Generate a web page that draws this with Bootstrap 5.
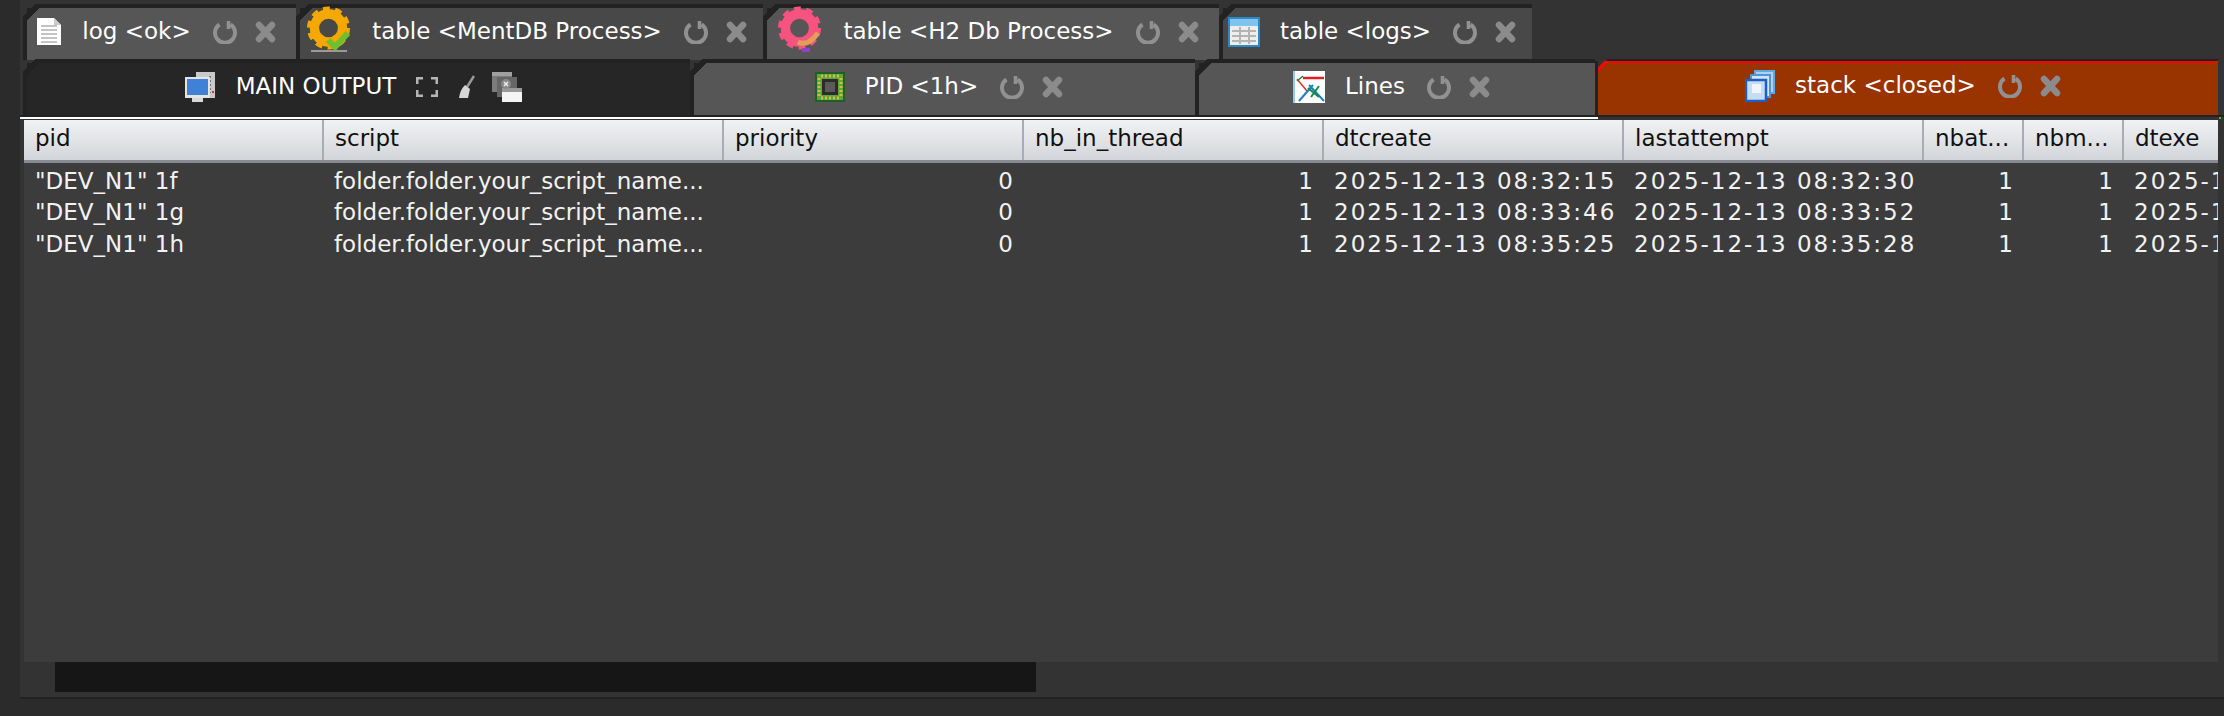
<!DOCTYPE html>
<html lang="en">
<head>
    <meta charset="UTF-8">
    <meta name="viewport" content="width=device-width, initial-scale=1.0">
    <title>MentDB Editor</title>
    <link rel="stylesheet" href="https://cdn.jsdelivr.net/npm/bootstrap@5.3.0/dist/css/bootstrap.min.css">
    <style>
        body {
            margin: 0;
            height: 716px;
            overflow: hidden;
            background: #2b2b2b;
            font-family: "DejaVu Sans", "Open Sans", sans-serif;
            font-size: 23px;
        }
        .app-shell {
            margin-left: 20px;
            height: 699px;
            padding-top: 4px;
            background: #333;
            border-bottom: 2px solid #222;
            overflow: hidden;
        }
        .tab-row { height: 55px; padding-left: 3px; }
        .tab-cell {
            flex: none;
            height: 56px;
            padding: 4px 0 0 4px;
            color: #fff;
            background: linear-gradient(135deg, transparent 9px, #222 9px);
        }
        .tab-fill {
            height: 100%;
            padding: 0 10px 5px 0;
            white-space: nowrap;
            background: linear-gradient(135deg, #222 9px, var(--tab-color) 9px);
        }
        .tab-light { --tab-color: #565656; }
        .tab-dim { --tab-color: #484848; }
        .tab-black { --tab-color: #262626; }
        .tab-w1 { width: 273px; }
        .tab-w2 { width: 467px; }
        .tab-w3 { width: 456px; }
        .tab-w4 { width: 313px; }
        .tab-w5 { width: 667px; }
        .tab-w6 { width: 505px; }
        .tab-w7 { width: 400px; }
        .tab-red {
            width: 623px;
            padding: 2px 0 0 0;
        }
        .tab-red .tab-fill {
            padding-right: 6px;
            box-shadow: inset 3px 0 0 #222;
            background:
                linear-gradient(135deg, #333 7px, #ff0000 7px, #ff0000 10px, transparent 10px),
                linear-gradient(#ff0000 2px, #993300 2px);
        }
        .tab-title { margin: 0 22px 0 20px; }
        .tab-icon { flex: none; display: block; }
        .gear-icon { margin: -10px 0 -5px; }
        .tool-gap { margin-left: 20px; }
        .action-reload { width: 24px; height: 24px; flex: none; margin-right: 17px; }
        .action-close { width: 23px; height: 22px; flex: none; }
        .tab-line { height: 4px; margin-top: 1px; border-top: 2px solid #222; }
        .tab-line-white { width: 1578px; height: 2px; background: #fff; }
        .tab-line-dot { width: 2px; height: 2px; margin-right: 3px; background: #1fd21f; }
        .table-wrap {
            margin: 1px 0 0 4px;
            width: 2194px;
            height: 542px;
            background: #3c3c3c;
            overflow: hidden;
        }
        .proc-table {
            width: 2399px;
            table-layout: fixed;
            margin: 0;
            --bs-table-bg: transparent;
            --bs-table-color: #f2f2f2;
            font-size: 23px;
            line-height: 1.2;
        }
        .proc-table th {
            height: 41px;
            padding: 0 0 2px 11px;
            font-weight: 400;
            color: #111;
            white-space: nowrap;
            overflow: hidden;
            vertical-align: middle;
            background: linear-gradient(#f1f2f4, #d2d5d9);
            border-right: 2px solid #a9adb3;
            border-bottom: 3px solid #868b94;
        }
        .proc-table td {
            height: 31.5px;
            padding: 0 10px 0 11px;
            white-space: nowrap;
            overflow: hidden;
            vertical-align: middle;
        }
        .proc-table td.date-cell { letter-spacing: 2px; }
        .proc-table tbody::before { content: ""; display: table-row; height: 5px; }
        .scroll-track { height: 30px; margin-left: 35px; }
        .scroll-thumb { width: 981px; height: 30px; background: #161616; }
    </style>
</head>
<body>

<svg width="0" height="0" class="position-absolute">
    <symbol id="ico-reload" viewBox="0 0 24 24">
        <path d="M6.5 4.5 A10 10 0 1 0 17.5 4.5" fill="none" stroke="#919191" stroke-width="4"/>
        <path d="M15.5 1 V9" fill="none" stroke="#919191" stroke-width="3.6"/>
    </symbol>
    <symbol id="ico-close" viewBox="0 0 23 22">
        <path d="M5 4 L18 18 M18 4 L5 18" fill="none" stroke="#8b8b8b" stroke-width="6.5" stroke-linecap="round"/>
    </symbol>
    <symbol id="ico-gear" viewBox="0 0 47 47">
        <circle cx="23.5" cy="23.5" r="15" fill="none" stroke="currentColor" stroke-width="10"/>
        <circle cx="23.5" cy="23.5" r="20" fill="none" stroke="currentColor" stroke-width="6" stroke-dasharray="7 5.57"/>
    </symbol>
</svg>

<div class="app-shell">

    <!-- first tab row -->
    <div class="d-flex tab-row">
        <div class="tab-cell tab-w1 tab-light">
            <div class="tab-fill d-flex align-items-center justify-content-center">
                <svg class="tab-icon" width="26" height="29" viewBox="0 0 26 29"><path d="M1 1 H18 L25 8 V28 H1 Z" fill="#fff"/><path d="M18 1 V8 H25" fill="#ccc"/><path d="M5 9 H21 M5 13 H21 M5 17 H21 M5 21 H21 M5 25 H21" stroke="#c4c4c4" stroke-width="2"/></svg>
                <span class="tab-title">log &lt;ok&gt;</span>
                <svg class="action-reload"><use href="#ico-reload"/></svg>
                <svg class="action-close"><use href="#ico-close"/></svg>
            </div>
        </div>
        <div class="tab-cell tab-w2 tab-dim">
            <div class="tab-fill d-flex align-items-center justify-content-center">
                <svg class="tab-icon gear-icon" width="47" height="47" viewBox="0 0 47 47" style="color:#f5a800"><use href="#ico-gear" width="47" height="44"/><path d="M6 45 H42" stroke="#9a9a9a" stroke-width="2"/><path d="M23 34 L30 41 L43 27" fill="none" stroke="#6fbf2e" stroke-width="6"/></svg>
                <span class="tab-title">table &lt;MentDB Process&gt;</span>
                <svg class="action-reload"><use href="#ico-reload"/></svg>
                <svg class="action-close"><use href="#ico-close"/></svg>
            </div>
        </div>
        <div class="tab-cell tab-w3 tab-light">
            <div class="tab-fill d-flex align-items-center justify-content-center">
                <svg class="tab-icon gear-icon" width="47" height="47" viewBox="0 0 47 47" style="color:#f8527f"><use href="#ico-gear" width="47" height="44"/><path d="M22 36 Q32 41 42 27" fill="none" stroke="#e0a05a" stroke-width="5"/><path d="M26 44 H34" stroke="#8a44c4" stroke-width="4"/></svg>
                <span class="tab-title">table &lt;H2 Db Process&gt;</span>
                <svg class="action-reload"><use href="#ico-reload"/></svg>
                <svg class="action-close"><use href="#ico-close"/></svg>
            </div>
        </div>
        <div class="tab-cell tab-w4 tab-dim">
            <div class="tab-fill d-flex align-items-center justify-content-center">
                <svg class="tab-icon" width="32" height="30" viewBox="0 0 32 30"><rect x="1" y="1" width="30" height="28" fill="#eee" stroke="#2d88c8" stroke-width="2"/><rect x="2" y="2" width="28" height="7" fill="#7fc4ee"/><path d="M4 14 H28 M4 19 H28 M4 24 H28 M12 10 V27 M21 10 V27" stroke="#b4b4b4" stroke-width="2"/></svg>
                <span class="tab-title">table &lt;logs&gt;</span>
                <svg class="action-reload"><use href="#ico-reload"/></svg>
                <svg class="action-close"><use href="#ico-close"/></svg>
            </div>
        </div>
    </div>

    <!-- second tab row -->
    <div class="d-flex tab-row">
        <div class="tab-cell tab-w5 tab-black">
            <div class="tab-fill d-flex align-items-center justify-content-center">
                <svg class="tab-icon" width="32" height="32" viewBox="0 0 32 32"><rect x="12" y="1" width="19" height="26" fill="#c9c9c9"/><path d="M26 5 V22" stroke="#777" stroke-width="2" stroke-dasharray="2 2"/><rect x="28" y="20" width="2" height="2" fill="#d33"/><rect x="1" y="6" width="25" height="21" fill="#e4e4e4"/><rect x="3" y="8" width="21" height="16" fill="#3f81d6"/><rect x="8" y="27" width="11" height="4" fill="#d8d8d8"/></svg>
                <span class="tab-title me-0">MAIN OUTPUT</span>
                <svg class="tab-icon tool-gap" width="22" height="20" viewBox="0 0 22 20"><path d="M1 7 V1 H7 M15 1 H21 V7 M21 13 V19 H15 M7 19 H1 V13" fill="none" stroke="#b5b5b5" stroke-width="3"/></svg>
                <svg class="tab-icon tool-gap" width="17" height="24" viewBox="0 0 17 24"><path d="M16 1 L9 12" stroke="#9a9a9a" stroke-width="2.5"/><path d="M7 10 L12 14 L10 23 H1 Q2 15 7 10 Z" fill="#d6d6d6"/></svg>
                <svg class="tab-icon ms-3" width="32" height="32" viewBox="0 0 32 32"><rect x="1" y="1" width="20" height="20" fill="#7c7c7c"/><rect x="1" y="1" width="20" height="4" fill="#a0a0a0"/><rect x="6" y="6" width="20" height="20" fill="#666"/><rect x="11" y="20" width="20" height="11" fill="#f4f4f4"/><rect x="11" y="17" width="20" height="4" fill="#999"/><circle cx="15" cy="13" r="5" fill="#8a8a8a"/><path d="M13 11 L17 15 M17 11 L13 15" stroke="#eee" stroke-width="1.5"/></svg>
            </div>
        </div>
        <div class="tab-cell tab-w6 tab-light">
            <div class="tab-fill d-flex align-items-center justify-content-center">
                <svg class="tab-icon" width="30" height="30" viewBox="0 0 30 30"><rect width="30" height="30" fill="#1f5f28"/><rect x="2" y="2" width="26" height="26" fill="#5da83a"/><path d="M6 4 H24 M6 26 H24 M4 6 V24 M26 6 V24" stroke="#d8b84a" stroke-width="3" stroke-dasharray="2 2"/><rect x="7" y="7" width="16" height="16" fill="#2c2c2c"/><rect x="10" y="10" width="10" height="10" fill="#5a5a5a"/></svg>
                <span class="tab-title">PID &lt;1h&gt;</span>
                <svg class="action-reload"><use href="#ico-reload"/></svg>
                <svg class="action-close"><use href="#ico-close"/></svg>
            </div>
        </div>
        <div class="tab-cell tab-w7 tab-light">
            <div class="tab-fill d-flex align-items-center justify-content-center">
                <svg class="tab-icon" width="32" height="32" viewBox="0 0 32 32"><rect width="32" height="32" fill="#fff"/><rect width="2" height="32" fill="#9cc8ec"/><path d="M10 7 H31" stroke="#e02020" stroke-width="2.5"/><path d="M4 8 L14 20" fill="none" stroke="#d33" stroke-width="1.5"/><path d="M4 10 L10 5" fill="none" stroke="#128a4a" stroke-width="1.5"/><path d="M6 30 L20 14 M16 14 L31 30" fill="none" stroke="#1f7fc0" stroke-width="2"/><path d="M15 17 L26 26 M26 15 L18 26" fill="none" stroke="#128a4a" stroke-width="2"/></svg>
                <span class="tab-title">Lines</span>
                <svg class="action-reload"><use href="#ico-reload"/></svg>
                <svg class="action-close"><use href="#ico-close"/></svg>
            </div>
        </div>
        <div class="tab-cell tab-red">
            <div class="tab-fill d-flex align-items-center justify-content-center">
                <svg class="tab-icon" width="30" height="32" viewBox="0 0 30 32"><rect x="10" y="1" width="19" height="22" fill="#a9d4f5" stroke="#5fa8e0" stroke-width="2"/><rect x="6" y="5" width="19" height="22" fill="#cfe6fa" stroke="#4f94d8" stroke-width="2"/><rect x="1" y="10" width="20" height="21" fill="#c6dcf2" stroke="#1f5fc4" stroke-width="2.5"/><rect x="7" y="14" width="9" height="9" fill="#eef6fd"/></svg>
                <span class="tab-title">stack &lt;closed&gt;</span>
                <svg class="action-reload"><use href="#ico-reload"/></svg>
                <svg class="action-close"><use href="#ico-close"/></svg>
            </div>
        </div>
    </div>

    <div class="tab-line d-flex"><div class="tab-line-white"></div><div class="tab-line-dot ms-auto"></div></div>

    <div class="table-wrap">
        <table class="table table-borderless proc-table">
            <colgroup>
                <col style="width:299px"><col style="width:400px"><col style="width:300px"><col style="width:300px"><col style="width:300px"><col style="width:300px"><col style="width:100px"><col style="width:100px"><col style="width:300px">
            </colgroup>
            <thead>
                <tr><th>pid</th><th>script</th><th>priority</th><th>nb_in_thread</th><th>dtcreate</th><th>lastattempt</th><th>nbat...</th><th>nbm...</th><th>dtexe</th></tr>
            </thead>
            <tbody id="procRows"></tbody>
        </table>
    </div>

    <div class="scroll-track"><div class="scroll-thumb"></div></div>
</div>

<script>
var rows = [
    { pid: '"DEV_N1" 1f', created: "2025-12-13 08:32:15", last: "2025-12-13 08:32:30" },
    { pid: '"DEV_N1" 1g', created: "2025-12-13 08:33:46", last: "2025-12-13 08:33:52" },
    { pid: '"DEV_N1" 1h', created: "2025-12-13 08:35:25", last: "2025-12-13 08:35:28" }
];

var body = document.getElementById("procRows");
rows.forEach(function (r) {
    body.innerHTML += `<tr>
        <td>${r.pid}</td>
        <td>folder.folder.your_script_name...</td>
        <td class="text-end">0</td>
        <td class="text-end">1</td>
        <td class="date-cell">${r.created}</td>
        <td class="date-cell">${r.last}</td>
        <td class="text-end">1</td>
        <td class="text-end">1</td>
        <td class="date-cell">${r.last}</td>
    </tr>`;
});
</script>

<script src="https://cdn.jsdelivr.net/npm/bootstrap@5.3.0/dist/js/bootstrap.bundle.min.js"></script>
</body>
</html>
